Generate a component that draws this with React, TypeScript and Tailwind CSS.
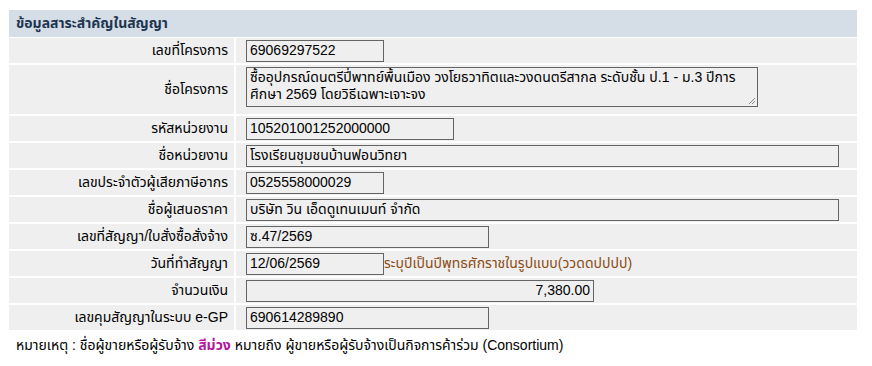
import React from "react";

const font = { fontFamily: '"Liberation Sans", Tahoma, "Noto Sans Thai", "Noto Sans", sans-serif' };

function Row({ label, children, tall }: { label: string; children: React.ReactNode; tall?: boolean }) {
  return (
    <>
      <div className={`bg-[#efefef] flex items-center justify-end pr-[6px] ${tall ? "h-[49px]" : "h-[25px]"}`}>
        {label}
      </div>
      <div className={`bg-[#efefef] flex items-center pl-[10px] ${tall ? "h-[49px]" : "h-[25px]"}`}>{children}</div>
    </>
  );
}

function Box({ w, value, right }: { w: string; value: string; right?: boolean }) {
  return (
    <div className={`${w} h-[22px] border border-[#646464] bg-[#efefef] flex items-center px-[3px] ${right ? "justify-end" : ""}`}>
      {value}
    </div>
  );
}

export default function App() {
  return (
    <div className="bg-white w-[872px] h-[366px] text-[14px] text-black" style={font}>
      <div className="pl-[9px] pt-[10px] w-[857px]">
        <div className="h-[27px] bg-[#d5dde6] flex items-center pl-[7px] font-bold text-[#1d3550]">
          ข้อมูลสาระสำคัญในสัญญา
        </div>
        <div className="grid grid-cols-[225px_621px] gap-x-[2px] gap-y-[2px] mt-[1px]">
          <Row label="เลขที่โครงการ">
            <Box w="w-[138px]" value="69069297522" />
          </Row>
          <Row label="ชื่อโครงการ" tall>
            <div className="relative w-[512px] h-[40px] border border-[#646464] bg-[#efefef] px-[3px] leading-[17px] pt-[1px] -mt-[5px] whitespace-nowrap">
              ซื้ออุปกรณ์ดนตรีปี่พาทย์พื้นเมือง วงโยธวาทิตและวงดนตรีสากล ระดับชั้น ป.1 - ม.3 ปีการ
              <br />
              ศึกษา 2569 โดยวิธีเฉพาะเจาะจง
              <svg className="absolute right-[1px] bottom-[1px]" width="8" height="8" viewBox="0 0 8 8">
                <path d="M7 1L1 7M7 4L4 7" stroke="#888" strokeWidth="1" />
              </svg>
            </div>
          </Row>
          <Row label="รหัสหน่วยงาน">
            <Box w="w-[208px]" value="105201001252000000" />
          </Row>
          <Row label="ชื่อหน่วยงาน">
            <Box w="w-[593px]" value="โรงเรียนชุมชนบ้านฟอนวิทยา" />
          </Row>
          <Row label="เลขประจำตัวผู้เสียภาษีอากร">
            <Box w="w-[138px]" value="0525558000029" />
          </Row>
          <Row label="ชื่อผู้เสนอราคา">
            <Box w="w-[593px]" value="บริษัท วิน เอ็ดดูเทนเมนท์ จำกัด" />
          </Row>
          <Row label="เลขที่สัญญา/ใบสั่งซื้อสั่งจ้าง">
            <Box w="w-[243px]" value="ซ.47/2569" />
          </Row>
          <Row label="วันที่ทำสัญญา">
            <Box w="w-[138px]" value="12/06/2569" />
            <span className="text-[#8b4a12]">ระบุปีเป็นปีพุทธศักราชในรูปแบบ(ววดดปปปป)</span>
          </Row>
          <Row label="จำนวนเงิน">
            <Box w="w-[348px]" value="7,380.00" right />
          </Row>
          <Row label="เลขคุมสัญญาในระบบ e-GP">
            <Box w="w-[243px]" value="690614289890" />
          </Row>
        </div>
        <div className="mt-[5px] pl-[7px]">
          หมายเหตุ : ชื่อผู้ขายหรือผู้รับจ้าง <span className="font-bold text-[#b5179e]">สีม่วง</span> หมายถึง ผู้ขายหรือผู้รับจ้างเป็นกิจการค้าร่วม (Consortium)
        </div>
      </div>
    </div>
  );
}
